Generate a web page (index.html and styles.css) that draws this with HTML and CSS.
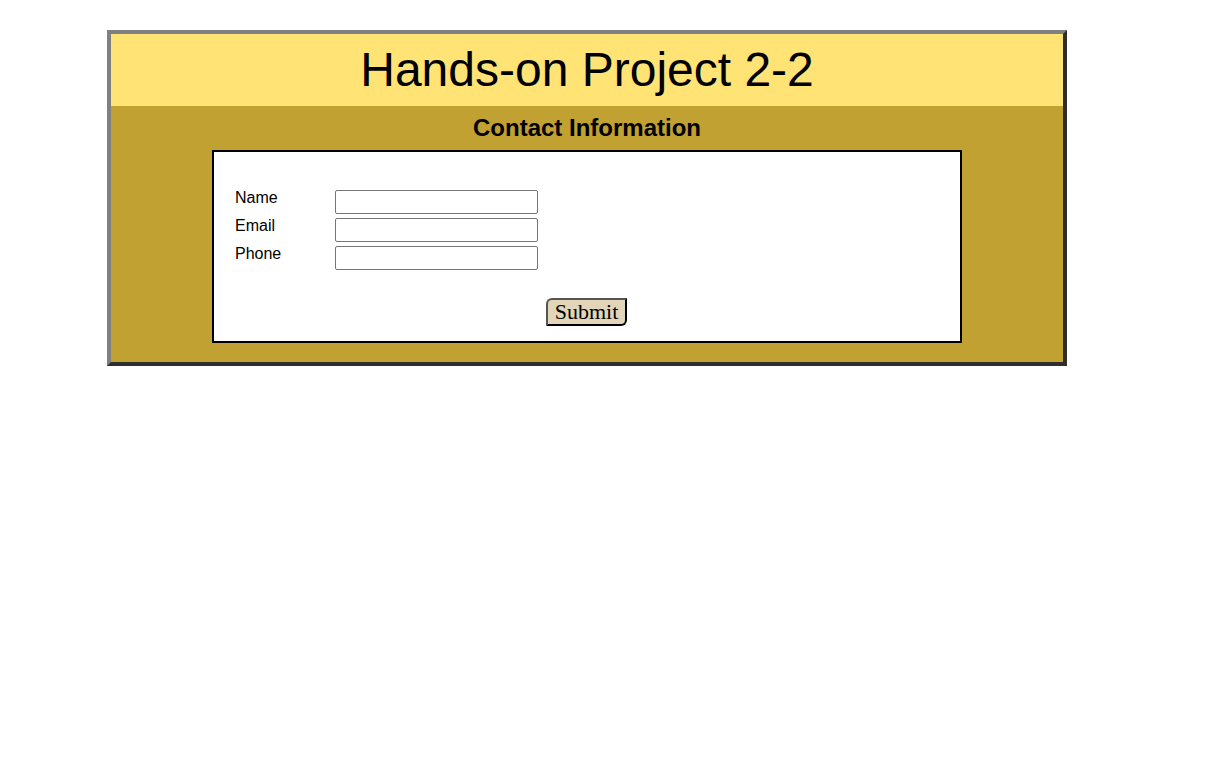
FILE: index.html
```html
<!DOCTYPE html>
<html lang="en">
<head>
<meta charset="utf-8">
<title>Hands-on Project 2-2</title>
<link rel="stylesheet" href="styles.css">
</head>
<body>
<div class="page">
  <header class="banner">
    <h1 class="title">Hands-on Project 2-2</h1>
  </header>
  <section class="content">
    <h2 class="subtitle">Contact Information</h2>
    <form class="card">
      <div class="fields">
        <label class="label" for="name">Name</label>
        <input class="field" type="text" id="name">
        <label class="label" for="email">Email</label>
        <input class="field" type="text" id="email">
        <label class="label" for="phone">Phone</label>
        <input class="field" type="text" id="phone">
      </div>
      <div class="actions">
        <button class="submit" type="button">Submit</button>
      </div>
    </form>
  </section>
</div>
</body>
</html>
```

FILE: styles.css
```css
html, body {
  margin: 0;
  padding: 0;
  background: #ffffff;
}

body {
  font-family: "Liberation Sans", Arial, sans-serif;
  color: #000;
}

.page {
  width: 952px;
  margin: 30px 0 0 107px;
  border: 4px solid;
  border-color: #808080 #2e2e2e #2e2e2e #808080;
}

.banner {
  background: #ffe375;
  padding: 8px 0 9px;
}

.title {
  margin: 0;
  font-size: 48px;
  font-weight: normal;
  line-height: 55px;
  text-align: center;
}

.content {
  background: #c0a132;
  padding: 8px 0 19px;
}

.subtitle {
  margin: 0 0 8px;
  font-size: 24px;
  font-weight: bold;
  line-height: 28px;
  text-align: center;
}

.card {
  width: 704px;
  margin: 0 auto;
  background: #fff;
  border: 2px solid #000;
  padding: 36px 21px 15px;
}

.fields {
  display: grid;
  grid-template-columns: 100px 203px;
  grid-auto-rows: 28px;
  align-items: start;
}

.label {
  font-size: 16px;
  line-height: 18px;
  padding-top: 1px;
}

.field {
  box-sizing: border-box;
  width: 203px;
  height: 24px;
  margin: 2px 0 0;
  border: 1px solid #767676;
  border-radius: 2px;
  background: #fff;
  padding: 1px 2px;
  font-size: 13px;
}

.actions {
  display: flex;
  justify-content: center;
  margin-top: 26px;
}

.submit {
  box-sizing: border-box;
  width: 81px;
  height: 28px;
  margin-right: 1px;
  padding: 0;
  font-family: "Liberation Serif", "Times New Roman", serif;
  font-size: 22px;
  line-height: 24px;
  color: #000;
  background: #e3d5b7;
  border: 2px solid;
  border-color: #555555 #000000 #000000 #555555;
  border-radius: 6px 0 6px 0;
}
```
